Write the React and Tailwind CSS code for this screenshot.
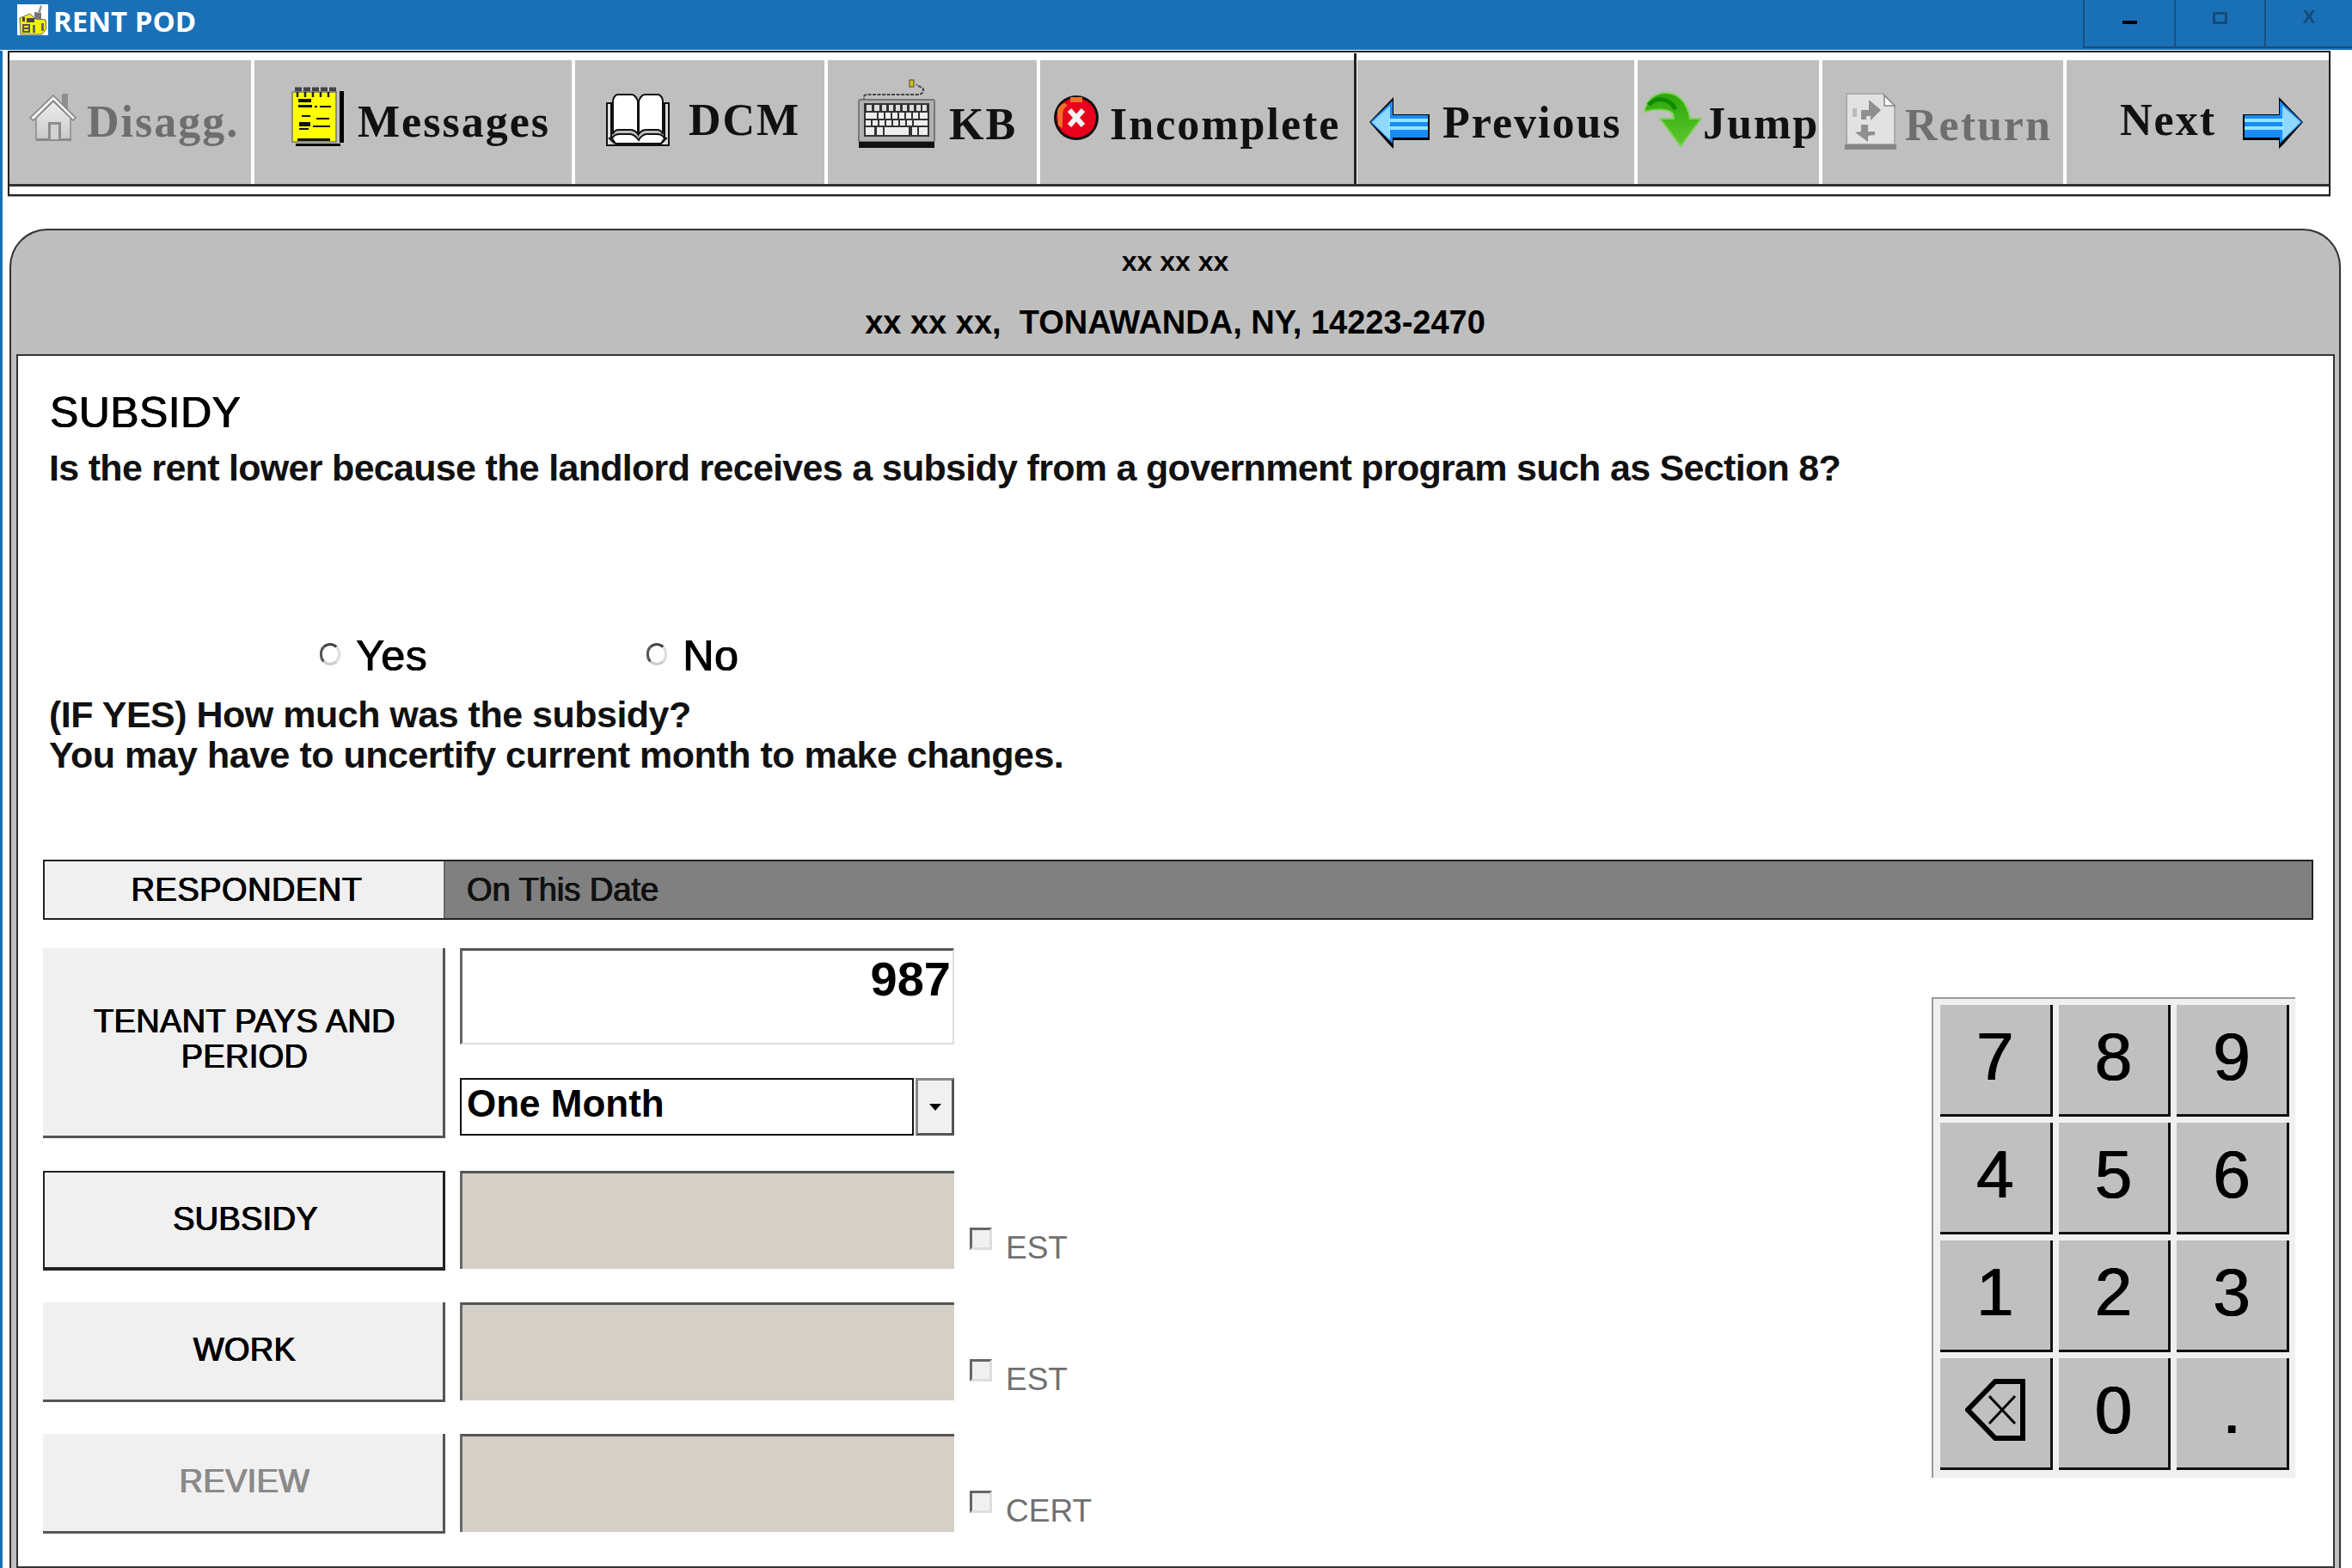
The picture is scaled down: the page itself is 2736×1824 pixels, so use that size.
import React from 'react'

const SANS = "font-['Liberation_Sans',Arial,sans-serif]"

// --- toolbar icons ---

function AppIcon() {
  return (
    <svg width="36" height="36" viewBox="0 0 36 36" className="ml-[20px] shrink-0 bg-white">
      <path d="M27 1l-3 8 3 1 2-8z" fill="#999" />
      <path d="M20 9l8 1v10h-8z" fill="#777" />
      <path d="M3 16l12-5 6 6 12 1 1 10-5 7H4z" fill="#f2f200" stroke="#666" strokeWidth="1" />
      <path d="M6 15h3v5H6zM11 16h9v5h-9z" fill="#444" />
      <path d="M6 23h9v10H6z" fill="#555" />
      <path d="M8 25h5v2H8zM8 29h5v2H8z" fill="#e8e800" />
      <path d="M18 24h3v9h-3zM28 22h3v9h-3z" fill="#666" />
    </svg>
  )
}

function HouseIcon() {
  return (
    <svg width="56" height="58" viewBox="0 0 56 58">
      <defs>
        <linearGradient id="wall" x1="0" y1="0" x2="0" y2="1">
          <stop offset="0" stopColor="#eeeeee" />
          <stop offset="1" stopColor="#c8c8c8" />
        </linearGradient>
      </defs>
      <rect x="38" y="2" width="7" height="18" fill="#8f8f8f" />
      <path d="M8 30L28 11l20 19v26H8z" fill="url(#wall)" stroke="#8a8a8a" strokeWidth="1.5" />
      <path d="M1 30L28 4l26 26-3 3L28 10 5 33z" fill="#f0f0f0" stroke="#808080" strokeWidth="1.5" />
      <rect x="8" y="54" width="41" height="3" fill="#8a8a8a" />
      <rect x="22" y="35" width="15" height="20" fill="#8c8c8c" />
      <rect x="25" y="38" width="9" height="17" fill="#d2d2d2" />
    </svg>
  )
}

function NotepadIcon() {
  return (
    <svg width="62" height="70" viewBox="0 0 62 70">
      <path d="M4 3h50" stroke="#444" strokeWidth="5" strokeDasharray="8 2" />
      <rect x="56" y="5" width="5" height="60" fill="#000" />
      <rect x="5" y="66" width="52" height="3" fill="#000" />
      <rect x="1" y="6" width="51" height="58" fill="#ffff00" stroke="#777" strokeWidth="1.5" />
      <path d="M7 6v6M16 6v6M25 6v6M34 6v6M43 6v6" stroke="#222" strokeWidth="2.5" />
      <path d="M8 14h15v4H8zM8 21h16v3H8zM27 22h3v2h-3zM33 22h13v2H33zM12 33h10v2H12zM29 36h15v2H29zM9 41h13v5H9zM25 45h20v2H25zM9 48h11v2H9zM7 60h38v3H7z" fill="#111" />
    </svg>
  )
}

function BookIcon() {
  return (
    <svg width="78" height="62" viewBox="0 0 78 62" fill="#fff" stroke="#111" strokeWidth="2">
      <path d="M2 12h5v40l-2 1 5 5h56l5-5-2-1V12h5v49H2z" fill="#ddd" />
      <path d="M9 48V10c0-3 2-8 6-8h16c3 0 6 4 7 8v38c-2-3-6-5-9-5H16c-3 0-6 2-7 5z" />
      <path d="M39 48V10c1-4 4-8 7-8h15c4 0 6 5 6 8v38c-1-3-4-5-7-5H48c-3 0-7 2-9 5z" />
      <path d="M8 53c2-4 6-5 9-5h12c3 0 7 3 10 7 2-4 6-7 9-7h12c3 0 7 1 9 5l-4 6H12z" />
    </svg>
  )
}

function KeyboardIcon() {
  const keys = [
    [10, 30, 6, 7], [19, 30, 6, 7], [28, 30, 5, 7], [36, 30, 5, 7], [44, 30, 5, 7], [52, 30, 5, 7], [60, 30, 5, 7], [68, 30, 5, 7], [75, 30, 5, 7],
    [9, 39, 13, 7], [24, 39, 6, 7], [32, 39, 6, 7], [40, 39, 6, 7], [48, 39, 6, 7], [56, 39, 6, 7], [64, 39, 6, 7], [72, 39, 9, 7],
    [9, 48, 6, 6], [17, 48, 6, 6], [25, 48, 6, 6], [33, 48, 6, 6], [41, 48, 6, 6], [49, 48, 6, 6], [57, 48, 6, 6], [65, 48, 16, 6],
    [9, 56, 10, 9], [22, 56, 7, 9], [31, 56, 28, 9], [63, 56, 6, 9], [71, 56, 10, 9],
  ]
  return (
    <svg width="90" height="80" viewBox="0 0 90 80">
      <path d="M7 26v-5c0-2 2-3 4-3h58c6 0 7-3 7-6 0-3-6-3-8-6" fill="none" stroke="#444" strokeWidth="2" strokeDasharray="4 1.5" />
      <rect x="60" y="1" width="5" height="8" fill="#d8c000" stroke="#444" strokeWidth="1" />
      <rect x="1" y="24" width="88" height="49" rx="2" fill="#b0b0b0" stroke="#777" strokeWidth="2" />
      <rect x="1" y="73" width="88" height="7" fill="#111" />
      <rect x="7" y="28" width="76" height="39" fill="#333" />
      {keys.map(([x, y, w, h], i) => (
        <rect key={i} x={x} y={y} width={w} height={h} fill={i < 9 ? '#ddd' : '#eee'} />
      ))}
    </svg>
  )
}

function StopIcon() {
  return (
    <svg width="54" height="54" viewBox="0 0 54 54">
      <ellipse cx="27" cy="27" rx="26" ry="26" fill="#111" />
      <ellipse cx="27" cy="27" rx="23" ry="23" fill="#e8001c" />
      <path d="M20 3h14v6H20zM5 19c1-4 5-9 9-9l3 3c-4 2-6 6-6 10v16l-5-3z" fill="#f4702a" />
      <path d="M19 18l16 18M35 18L19 36" stroke="#f4f4f4" strokeWidth="6" />
    </svg>
  )
}

function BlueArrow({ flip }) {
  return (
    <svg width="70" height="60" viewBox="0 0 70 60" className={flip ? '-scale-x-100' : ''}>
      <path d="M28 0v20h42v30H28v10L22 54 0 29z" fill="#000" />
      <path d="M27 4v17h41v26H27v7L1 29z" fill="#1b8cf5" />
      <path d="M24 10L3 29l21 21V10z" fill="#8fd8ff" />
      <path d="M22 25h46v4H22zM22 34h46v4H22z" fill="#8fe6ff" />
    </svg>
  )
}

function JumpIcon() {
  return (
    <svg width="68" height="64" viewBox="0 0 68 64">
      <defs>
        <linearGradient id="jump" x1="0" y1="0" x2="0" y2="1">
          <stop offset="0" stopColor="#2aa508" />
          <stop offset="1" stopColor="#5fc92e" />
        </linearGradient>
      </defs>
      <path d="M1 23C2 9 14 1 26 1c15 0 25 12 28 30h13L43 63 19 31h16c0-5-3-9-10-10-7-1-16 0-24 2z" fill="url(#jump)" stroke="#7ed357" strokeWidth="2" />
      <path d="M6 15c7-9 24-9 31 5" fill="none" stroke="#0f8a00" strokeWidth="5" />
    </svg>
  )
}

function ReturnIcon() {
  return (
    <svg width="60" height="66" viewBox="0 0 60 66">
      <path d="M2 1h42l14 14v45H2z" fill="#e2e2e2" stroke="#aaa" strokeWidth="2" />
      <path d="M46 3v12h12z" fill="#fafafa" stroke="#888" strokeWidth="1.5" />
      <rect x="0" y="60" width="60" height="6" fill="#858585" />
      <rect x="9" y="18" width="5" height="10" fill="#bbb" />
      <path d="M19 31V20h9V8l14 12-12 12v-5h-5v4zM19 37h8v8h8v4l-8 1v7L12 46l7-1z" fill="#8f8f8f" />
    </svg>
  )
}

const TOOL_TEXT = "font-['Liberation_Serif',serif] font-bold text-[52px] leading-none tracking-[2px] whitespace-nowrap"

function ToolButton({ className, iconClass, textClass, icon, children }) {
  return (
    <div className={`relative flex items-start shrink-0 h-full bg-[#bfbfbf] ${className}`}>
      {icon && <div className={`shrink-0 ${iconClass}`}>{icon}</div>}
      <span className={`${TOOL_TEXT} ${textClass}`}>{children}</span>
    </div>
  )
}

function Toolbar() {
  return (
    <div className="ml-[6px] mt-px w-[2702px] h-[169px] border-2 border-[#222] bg-white pt-[9px] shadow-[0_1px_1px_#aaa]">
      <div className="relative flex h-[147px] border-b-[3px] border-[#333]">
        <ToolButton className="w-[281px]" iconClass="ml-[23px] mt-[37px]" textClass="ml-[11px] mt-[46px] text-[#6e6e6e]" icon={<HouseIcon />}>
          Disagg.
        </ToolButton>
        <ToolButton className="w-[373px] border-l-[4px] border-white" iconClass="ml-[43px] mt-[31px]" textClass="ml-[15px] mt-[46px] text-[#111]" icon={<NotepadIcon />}>
          Messages
        </ToolButton>
        <ToolButton className="w-[294px] border-l-[4px] border-white" iconClass="ml-[35px] mt-[38px]" textClass="ml-[19px] mt-[44px] text-[#111]" icon={<BookIcon />}>
          DCM
        </ToolButton>
        <ToolButton className="w-[247px] border-l-[4px] border-white" iconClass="ml-[35px] mt-[22px]" textClass="ml-[16px] mt-[49px] text-[#111]" icon={<KeyboardIcon />}>
          KB
        </ToolButton>
        <ToolButton className="w-[369px] border-l-[4px] border-white" iconClass="ml-[15px] mt-[40px]" textClass="ml-[12px] mt-[49px] text-[#111]" icon={<StopIcon />}>
          Incomplete
        </ToolButton>
        <div className="absolute z-10 left-[1564px] -top-[8px] w-[3px] h-[152px] bg-[#222]" />
        <ToolButton className="w-[326px] border-l-[4px] border-white" iconClass="ml-[14px] mt-[43px]" textClass="ml-[15px] mt-[47px] text-[#111]" icon={<BlueArrow />}>
          Previous
        </ToolButton>
        <ToolButton className="w-[215px] border-l-[4px] border-white" iconClass="ml-[7px] mt-[37px]" textClass="ml-[1px] mt-[48px] text-[#111]" icon={<JumpIcon />}>
          Jump
        </ToolButton>
        <ToolButton className="w-[284px] border-l-[4px] border-white" iconClass="ml-[26px] mt-[38px]" textClass="ml-[10px] mt-[50px] text-[#6e6e6e]" icon={<ReturnIcon />}>
          Return
        </ToolButton>
        <ToolButton className="w-[309px] border-l-[4px] border-white flex-row-reverse justify-end" iconClass="ml-[31px] mt-[43px]" textClass="ml-[62px] mt-[44px] text-[#111]" icon={<BlueArrow flip />}>
          Next
        </ToolButton>
      </div>
    </div>
  )
}

function TitleBar() {
  return (
    <div className="flex items-start h-[58px] bg-[#1a70b7]">
      <div className="mt-[5px]">
        <AppIcon />
      </div>
      <span className="ml-[6px] mt-[4px] font-['Open_Sans',sans-serif] font-bold text-[33px] leading-[42px] text-white">RENT POD</span>
      <div className="ml-auto flex h-[56px]">
        <div className="w-[106px] border-l-2 border-b-2 border-[#174f80] flex justify-center">
          <div className="mt-[24px] w-[17px] h-[4px] bg-black" />
        </div>
        <div className="w-[105px] border-l-2 border-b-2 border-[#174f80] flex justify-center">
          <div className="mt-[14px] w-[17px] h-[14px] border-[3px] border-[#134a7a]" />
        </div>
        <div className="w-[102px] border-l-2 border-b-2 border-[#174f80] flex justify-center">
          <span className={`${SANS} mt-[7px] font-bold text-[22px] leading-[26px] text-[#134a7a]`}>X</span>
        </div>
      </div>
    </div>
  )
}

// --- form parts ---

const HEAVY = '[text-shadow:0.6px_0_0_currentColor,-0.6px_0_0_currentColor,0_0.4px_0_currentColor]'

function Radio({ className }) {
  return <div className={`w-[24px] h-[26px] rounded-full border-[3px] border-t-[#444] border-l-[#555] border-r-[#ddd] border-b-[#ccc] bg-white ${className}`} />
}

function Choice({ label, className }) {
  return (
    <div className={`flex items-start ${className}`}>
      <Radio className="mt-[10px]" />
      <span className={`${SANS} ml-[18px] text-[50px] leading-none tracking-[0.6px] text-black ${HEAVY}`}>{label}</span>
    </div>
  )
}

function SideButton({ children, active, dim, h = 'h-[116px]' }) {
  const border = active
    ? 'border-2 border-[#222] border-r-[3px] border-b-[4px]'
    : 'border-r-[3px] border-b-[3px] border-r-[#555] border-b-[#555]'
  return (
    <div className={`w-[468px] ${h} shrink-0 flex items-center justify-center pl-[4px] pb-[2px] text-center bg-[#f0f0f0] ${border} ${SANS} text-[38px] leading-[41px] tracking-[0.3px] ${HEAVY} ${dim ? 'text-[#8a8a8a]' : 'text-black'}`}>
      {children}
    </div>
  )
}

function FormRow({ label, active, dim, check, className }) {
  return (
    <div className={`flex items-start h-[116px] ${className}`}>
      <SideButton active={active} dim={dim}>{label}</SideButton>
      <div className="ml-[17px] w-[575px] h-[114px] shrink-0 bg-[#d4d0c8] border-t-[3px] border-l-[3px] border-t-[#555] border-l-[#666]" />
      <div className="ml-[18px] mt-[66px] w-[26px] h-[26px] shrink-0 bg-[#f0f0f0] border-[3px] border-t-[#666] border-l-[#666] border-r-[#ddd] border-b-[#ddd]" />
      <span className={`${SANS} ml-[16px] mt-[71px] text-[37px] leading-none text-[#707070]`}>{check}</span>
    </div>
  )
}

function BackspaceGlyph() {
  return (
    <svg width="70" height="72" viewBox="0 0 70 72" fill="none" stroke="#000">
      <path d="M67 3H35L3 36l32 33h32z" strokeWidth="6" />
      <path d="M28 20l30 32M58 20L28 52" strokeWidth="3" />
    </svg>
  )
}

function Key({ children }) {
  return (
    <div className={`h-[130px] pb-[8px] flex items-center justify-center bg-[#c0c0c0] border-r-[3px] border-b-[3px] border-[#111] ${SANS} text-[78px] leading-none text-black ${HEAVY}`}>
      {children}
    </div>
  )
}

function Keypad() {
  const keys = ['7', '8', '9', '4', '5', '6', '1', '2', '3']
  return (
    <div className="mt-[90px] mr-[21px] w-[423px] h-[559px] grid grid-cols-3 gap-[7px] content-start pl-[8px] pr-[7px] pt-[7px] bg-[#f0f0f0] border-t-2 border-l-2 border-[#999]">
      {keys.map((k) => (
        <Key key={k}>{k}</Key>
      ))}
      <Key><BackspaceGlyph /></Key>
      <Key>0</Key>
      <Key>.</Key>
    </div>
  )
}

function Panel() {
  return (
    <div className="ml-[8px] mt-[38px] w-[2712px] h-[1558px] rounded-t-[44px] border-2 border-b-0 border-[#333] bg-[#bebebe] flex flex-col">
      <div className={`h-[144px] shrink-0 flex flex-col items-center ${SANS} font-bold text-black`}>
        <div className="mt-[19px] text-[32px] leading-[34px]">xx xx xx</div>
        <div className="mt-[34px] text-[38px] leading-[40px] whitespace-pre">xx xx xx,  TONAWANDA, NY, 14223-2470</div>
      </div>
      <div className="ml-[6px] mr-[5px] flex-1 border-2 border-[#333] bg-white pl-[29px]">
        <h1 className={`${SANS} ml-[8px] mt-[41px] text-[50px] leading-none tracking-[0.4px] text-black ${HEAVY}`}>SUBSIDY</h1>
        <p className={`${SANS} ml-[7px] mt-[18px] font-bold text-[43px] leading-none tracking-[-0.7px] text-[#111] whitespace-nowrap`}>
          Is the rent lower because the landlord receives a subsidy from a government program such as Section 8?
        </p>
        <div className="ml-[8px] mt-[172px] flex">
          <Choice label="Yes" className="ml-[314px]" />
          <Choice label="No" className="ml-[255px]" />
        </div>
        <p className={`${SANS} ml-[7px] mt-[20px] font-bold text-[43px] leading-[47px] tracking-[-0.5px] text-[#111] whitespace-nowrap`}>
          (IF YES) How much was the subsidy?
          <br />
          You may have to uncertify current month to make changes.
        </p>
        <div className="mt-[98px] w-[2641px] h-[70px] flex border-2 border-[#222] bg-[#808080]">
          <div className={`w-[466px] flex items-center justify-center pl-[6px] bg-[#f0f0f0] border-r-2 border-[#666] ${SANS} text-[38px] tracking-[0.5px] text-black ${HEAVY}`}>
            RESPONDENT
          </div>
          <div className={`ml-[25px] flex items-center ${SANS} text-[38px] text-[#111] ${HEAVY}`}>On This Date</div>
        </div>
        <div className="flex justify-between w-[2641px]">
          <div className="mt-[33px] flex flex-col">
            <div className="flex items-start h-[221px]">
              <SideButton h="h-[221px]">
                <span className="mb-[5px]">TENANT PAYS AND<br />PERIOD</span>
              </SideButton>
              <div className="ml-[17px] w-[575px] flex flex-col">
                <div className={`h-[112px] pr-[2px] pt-[5px] text-right bg-white border-t-[3px] border-l-[3px] border-r-2 border-b-2 border-t-[#555] border-l-[#666] border-r-[#ddd] border-b-[#ddd] ${SANS} font-bold text-[56px] leading-[56px] text-black`}>
                  987
                </div>
                <div className="mt-[39px] flex h-[67px]">
                  <div className={`w-[528px] border-2 border-[#111] bg-white pl-[6px] pt-[5px] ${SANS} font-bold text-[44px] leading-[46px] text-black`}>
                    One Month
                  </div>
                  <div className="ml-[2px] flex-1 flex items-center justify-center bg-[#f0f0f0] border-[3px] border-t-[#888] border-l-[#888] border-r-[#555] border-b-[#555]">
                    <div className="w-0 h-0 border-x-[7px] border-t-[8px] border-x-transparent border-t-black" />
                  </div>
                </div>
              </div>
            </div>
            <FormRow label="SUBSIDY" active check="EST" className="mt-[38px]" />
            <FormRow label="WORK" check="EST" className="mt-[37px]" />
            <FormRow label="REVIEW" dim check="CERT" className="mt-[37px]" />
          </div>
          <Keypad />
        </div>
      </div>
    </div>
  )
}

export default function App() {
  return (
    <div className="w-[2736px] h-[1824px] overflow-hidden bg-white">
      <TitleBar />
      <div className="h-[1766px] border-l-[3px] border-[#1a70b7]">
        <Toolbar />
        <Panel />
      </div>
    </div>
  )
}
